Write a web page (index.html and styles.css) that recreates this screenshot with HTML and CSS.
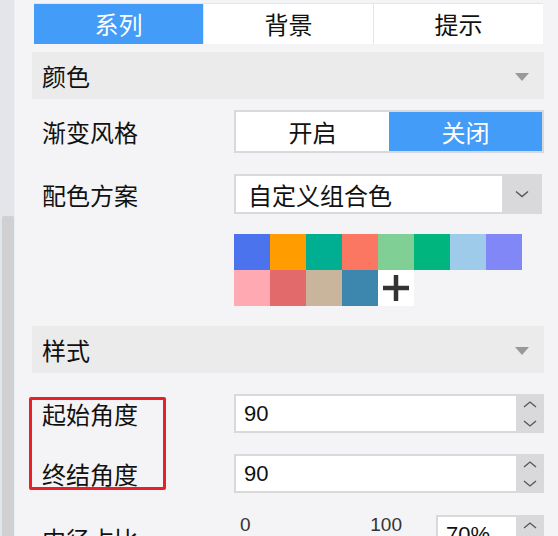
FILE: index.html
```html
<!DOCTYPE html>
<html lang="zh-CN">
<head>
  <meta charset="UTF-8">
  <meta name="viewport" content="width=device-width, initial-scale=1.0">
  <title>系列设置</title>
  <link rel="stylesheet" href="styles.css">
</head>
<body>
  <div class="scroll-track">
    <div class="scroll-thumb"></div>
  </div>

  <div class="panel">
    <div class="tabs">
      <div class="tab active">系列</div>
      <div class="tab">背景</div>
      <div class="tab">提示</div>
    </div>

    <div class="section-head">
      <span>颜色</span>
      <i class="caret"></i>
    </div>

    <div class="row row-toggle">
      <label class="label">渐变风格</label>
      <div class="switch">
        <div class="switch-opt">开启</div>
        <div class="switch-opt on">关闭</div>
      </div>
    </div>

    <div class="row row-select">
      <label class="label">配色方案</label>
      <div class="select">
        <div class="select-value">自定义组合色</div>
        <div class="select-btn">
          <svg width="14" height="8" viewBox="0 0 14 8"><path d="M1 1.5 L7 6.5 L13 1.5" fill="none" stroke="#555" stroke-width="1.4"/></svg>
        </div>
      </div>
    </div>

    <div class="row row-swatches">
      <div class="label"></div>
      <div class="swatches">
        <span class="sw" style="background:#4c73ee"></span>
        <span class="sw" style="background:#ff9c00"></span>
        <span class="sw" style="background:#00ae91"></span>
        <span class="sw" style="background:#fb7762"></span>
        <span class="sw" style="background:#80d095"></span>
        <span class="sw" style="background:#00b67e"></span>
        <span class="sw" style="background:#9ecbe9"></span>
        <span class="sw" style="background:#8287f8"></span>
        <span class="sw" style="background:#ffa9b2"></span>
        <span class="sw" style="background:#e26a6a"></span>
        <span class="sw" style="background:#c9b59c"></span>
        <span class="sw" style="background:#3d86ae"></span>
        <span class="sw sw-add">
          <svg width="30" height="32" viewBox="0 0 30 32"><path d="M15 3 V29 M2 16 H28" stroke="#333" stroke-width="4.5"/></svg>
        </span>
      </div>
    </div>

    <div class="section-head head-style">
      <span>样式</span>
      <i class="caret"></i>
    </div>

    <div class="angle-group">
      <div class="row row-num">
        <label class="label">起始角度</label>
        <div class="num">
          <div class="num-value">90</div>
          <div class="spin">
            <svg width="14" height="30" viewBox="0 0 14 30"><path d="M1 8 L7 3 L13 8 M1 22 L7 27 L13 22" fill="none" stroke="#555" stroke-width="1.3"/></svg>
          </div>
        </div>
      </div>
      <div class="row row-num">
        <label class="label">终结角度</label>
        <div class="num">
          <div class="num-value">90</div>
          <div class="spin">
            <svg width="14" height="30" viewBox="0 0 14 30"><path d="M1 8 L7 3 L13 8 M1 22 L7 27 L13 22" fill="none" stroke="#555" stroke-width="1.3"/></svg>
          </div>
        </div>
      </div>
    </div>

    <div class="row row-range">
      <label class="label">内径占比</label>
      <div class="range">
        <span>0</span>
        <span>100</span>
      </div>
      <div class="num num-small">
        <div class="num-value">70%</div>
        <div class="spin">
          <svg width="14" height="30" viewBox="0 0 14 30"><path d="M1 8 L7 3 L13 8 M1 22 L7 27 L13 22" fill="none" stroke="#555" stroke-width="1.3"/></svg>
        </div>
      </div>
    </div>
  </div>
</body>
</html>
```

FILE: styles.css
```css
body {
  margin: 0;
  height: 536px;
  overflow: hidden;
  display: flex;
  background-color: #f4f4f6;
  font-family: "Noto Sans CJK SC", "Liberation Sans", sans-serif;
  font-size: 24px;
  color: #111;
}

.scroll-track {
  width: 14px;
  flex-shrink: 0;
  padding-top: 216px;
  background-color: #e4e5e8;
  border-right: 1px solid #e9eef4;
}

.scroll-thumb {
  margin-left: 2px;
  height: 400px;
  background-color: #d0d0d3;
  border-radius: 2px 2px 0 0;
}

.panel {
  width: 512px;
  padding-left: 17px;
}

.tabs {
  display: flex;
  margin: 3px 0 0 2px;
  width: 509px;
  height: 40px;
  border-top: 1px solid #e6e6e8;
  background-color: #e6e6e8;
  gap: 1px;
}

.tab {
  flex: 1;
  display: flex;
  align-items: center;
  justify-content: center;
  background-color: #fff;
  line-height: 1;
}

.tab.active {
  background-color: #439cf7;
  color: #fff;
}

.section-head {
  margin-top: 8px;
  height: 47px;
  padding: 0 15px 0 10px;
  display: flex;
  align-items: center;
  justify-content: space-between;
  background-color: #ebebeb;
}

.caret {
  width: 0;
  height: 0;
  border-left: 7px solid transparent;
  border-right: 7px solid transparent;
  border-top: 8px solid #999;
  margin-top: 2px;
}

.row {
  display: flex;
  align-items: center;
}

.label {
  width: 192px;
  padding-left: 10px;
  flex-shrink: 0;
}

.row-toggle {
  margin-top: 11px;
}

.switch {
  width: 306px;
  height: 39px;
  display: flex;
  border: 2px solid #d9d9dc;
  background-color: #fff;
}

.switch-opt {
  flex: 1;
  display: flex;
  align-items: center;
  justify-content: center;
}

.switch-opt.on {
  background-color: #439cf7;
  color: #fff;
}

.row-select {
  margin-top: 21px;
}

.select {
  width: 306px;
  height: 36px;
  display: flex;
  border: 2px solid #d9d9dc;
  border-right: 0;
  background-color: #fff;
}

.select-value {
  flex: 1;
  padding-left: 12px;
  display: flex;
  align-items: center;
}

.select-btn {
  width: 40px;
  display: flex;
  align-items: center;
  justify-content: center;
  background-color: #d9d9dc;
}

.row-swatches {
  margin-top: 20px;
  align-items: flex-start;
}

.swatches {
  width: 288px;
  display: flex;
  flex-wrap: wrap;
}

.sw {
  width: 36px;
  height: 36px;
}

.sw-add {
  background-color: #fff;
  display: flex;
  align-items: center;
  justify-content: center;
}

.head-style {
  margin-top: 20px;
}

.angle-group {
  position: relative;
  margin-top: 21px;
  display: flex;
  flex-direction: column;
  gap: 21px;
}

.angle-group::before {
  content: "";
  position: absolute;
  left: -3px;
  top: 3px;
  width: 131px;
  height: 87px;
  border: 3px solid #ea1f27;
  border-radius: 2px;
}

.num {
  width: 310px;
  height: 39px;
  display: flex;
  box-sizing: border-box;
  border: 2px solid #d9d9dc;
  border-right: 0;
  background-color: #fff;
}

.num-value {
  flex: 1;
  padding-left: 8px;
  display: flex;
  align-items: center;
  font-family: "Liberation Sans", sans-serif;
  font-size: 22px;
  color: #111;
}

.spin {
  width: 28px;
  display: flex;
  align-items: center;
  justify-content: center;
  background-color: #d9d9dc;
}

.row-range {
  margin-top: 22px;
  align-items: flex-start;
}

.row-range .label {
  padding-top: 6px;
}

.range {
  width: 202px;
  display: flex;
  justify-content: space-between;
  padding: 0 34px 0 6px;
  font-family: "Liberation Sans", sans-serif;
  font-size: 19px;
  color: #333;
  line-height: 20px;
  box-sizing: border-box;
}

.num-small {
  width: 108px;
}
```
